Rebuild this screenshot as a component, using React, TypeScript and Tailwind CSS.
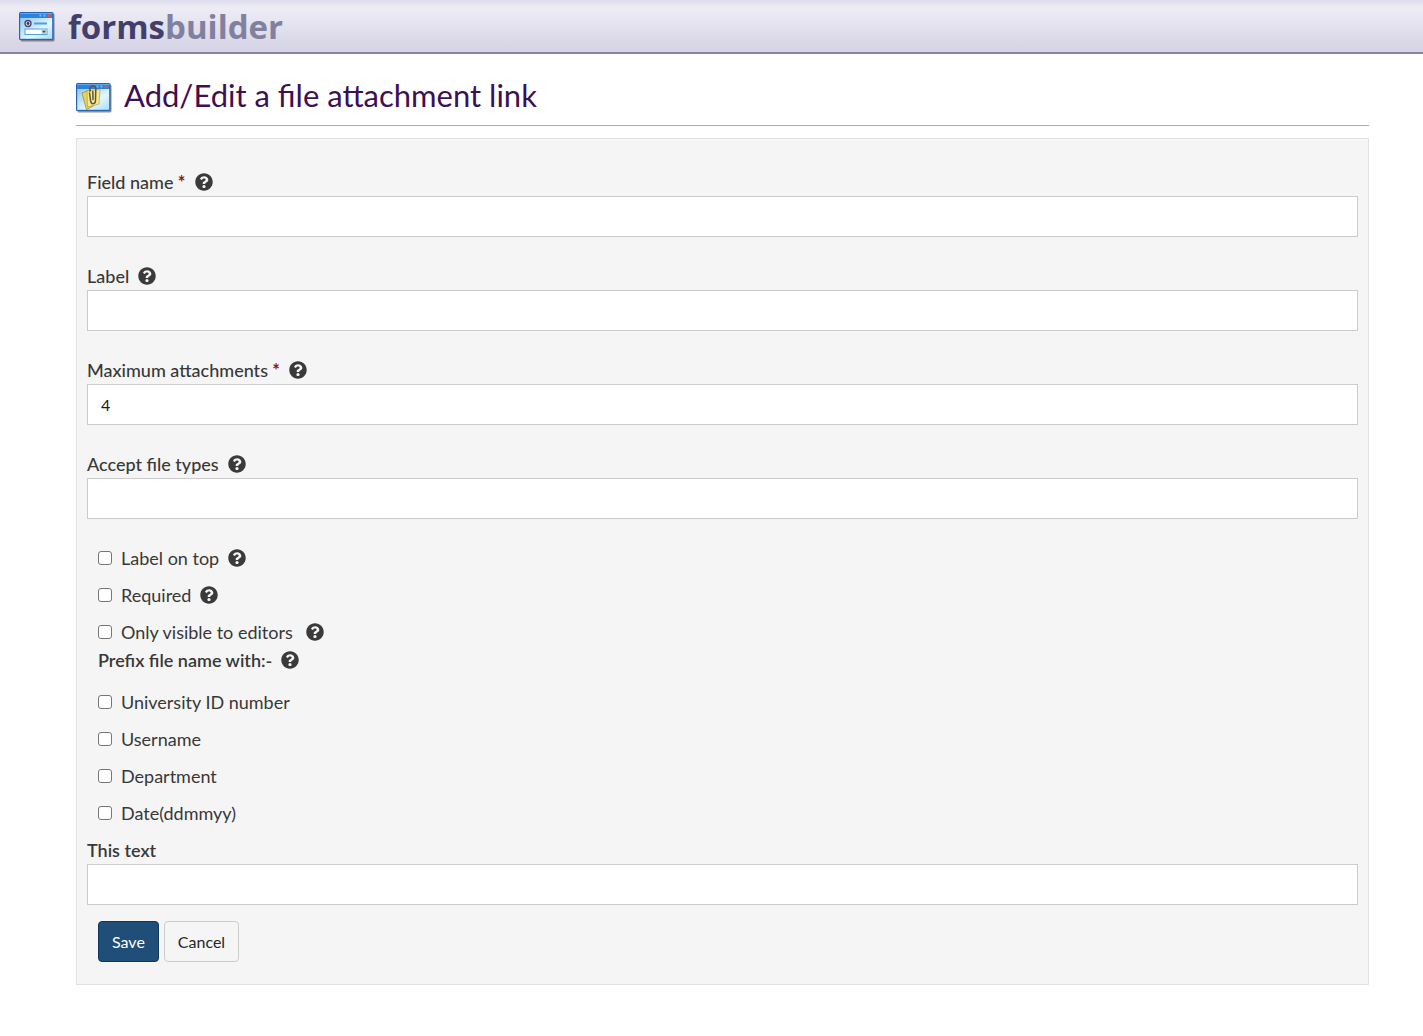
import React from 'react';
import { FaQuestionCircle } from 'react-icons/fa';

interface HelpProps {
  topic: string;
}

const Help: React.FC<HelpProps> = ({ topic }) => (
  <button type="button" aria-label={`Help: ${topic}`} className="text-[#3a3a3a]">
    <FaQuestionCircle size={18} />
  </button>
);

interface TextFieldProps {
  id: string;
  label: string;
  required?: boolean;
  help?: boolean;
  value?: string;
}

const TextField: React.FC<TextFieldProps> = ({ id, label, required, help = true, value = '' }) => (
  <div>
    <div className="flex h-7 items-center gap-[9px]">
      <label
        htmlFor={id}
        className={`text-lg leading-7 text-[#383838] ${help ? 'font-medium' : 'font-semibold'}`}
      >
        {label}
        {required && <span className="font-bold text-[#8c1515]"> *</span>}
      </label>
      {help && <Help topic={label} />}
    </div>
    <input
      id={id}
      type="text"
      defaultValue={value}
      required={required}
      className="block h-[41px] w-full border border-[#cbcbcb] bg-white px-[13px] text-base text-[#1a1a1a]"
    />
  </div>
);

interface TickBoxProps {
  id: string;
  label: string;
  help?: boolean;
}

const TickBox: React.FC<TickBoxProps> = ({ id, label, help }) => (
  <div className="flex h-[37px] items-center gap-[9px]">
    <div className="flex items-center gap-[9px]">
      <input
        id={id}
        type="checkbox"
        className="size-[14px] appearance-none rounded-[3px] border border-[#767676] bg-white checked:bg-[#1f4e79]"
      />
      <label htmlFor={id} className="text-lg leading-7 whitespace-pre text-[#383838]">
        {label}
      </label>
    </div>
    {help && <Help topic={label} />}
  </div>
);

// Small application window, used as the frame of both icons
const WindowFrame: React.FC<{ id: string; children: React.ReactNode }> = ({ id, children }) => (
  <svg viewBox="0 0 36 30" className="h-[30px] w-9 shrink-0" aria-hidden="true">
    <defs>
      <linearGradient id={id} x1="0" y1="0" x2="1" y2="1">
        <stop offset="0" stopColor="#8fc8f6" />
        <stop offset="0.6" stopColor="#e2f7ff" />
        <stop offset="1" stopColor="#a9dcfa" />
      </linearGradient>
    </defs>
    <rect x="1.5" y="1.5" width="34" height="28" rx="1.5" fill="#55525f" opacity="0.65" />
    <rect x="0" y="0" width="34.5" height="28" rx="1.5" fill="#2864b4" />
    <rect x="1" y="1" width="32.5" height="5" fill="#2c83dd" />
    <rect x="1" y="1" width="32.5" height="1" fill="#5ba8ee" />
    <rect x="20.5" y="2.5" width="2" height="2" fill="#7dbaf2" />
    <rect x="24.5" y="2.5" width="2" height="2" fill="#7dbaf2" />
    <rect x="28.5" y="2" width="3" height="3" fill="#dd5a38" />
    <rect x="1.2" y="6" width="32" height="20.8" fill={`url(#${id})`} />
    {children}
  </svg>
);

const FormIcon = () => (
  <WindowFrame id="form-window">
    <circle cx="9" cy="11.5" r="3" fill="#e6e6f0" stroke="#454069" strokeWidth="1.3" />
    <circle cx="9" cy="11.5" r="1.4" fill="#393458" />
    <rect x="15" y="10.5" width="13" height="2" fill="#4ba0df" />
    <rect x="6" y="17" width="22" height="5.5" fill="#fff" stroke="#50a3df" />
    <rect x="22.5" y="17.5" width="5" height="4.5" fill="#c5ccd2" />
    <path d="M23.2 18.8h3.6L25 21z" fill="#454553" />
  </WindowFrame>
);

const AttachmentIcon = () => (
  <WindowFrame id="attachment-window">
    <path d="M6 10l8-3.5 4 16-7.5 4.3z" fill="#e5d35d" stroke="#948338" strokeWidth="0.7" />
    <path d="M11 8l13-1.5-1 14.5-11.5 3z" fill="#faeb86" stroke="#b29f48" strokeWidth="0.7" />
    <path
      d="M13.5 10l1.2 8.5c.7 3.4 4.7 2.5 4.8-.8L19.8 6c-.2-4.1-5.8-3.8-5.8-.3v2.6M16.8 8.5l.2 8"
      fill="none"
      stroke="#57554c"
      strokeWidth="1.5"
      strokeLinecap="round"
    />
  </WindowFrame>
);

const App: React.FC = () => {
  return (
    <div className="min-h-screen bg-white font-['Lato',sans-serif]">
      <header className="flex h-[54px] items-center gap-[13px] border-b-2 border-[#8885a3] bg-linear-to-b from-[#dddced] via-[#eeedf6] via-15% to-[#d4d2e4] px-[19px] pt-[2px]">
        <FormIcon />
        <span className="font-['Open_Sans',sans-serif] text-[33px] leading-[50px] font-bold text-[#433f6b]">
          forms<span className="text-[#8280a0]">builder</span>
        </span>
      </header>

      <main className="pr-[54px] pl-[76px]">
        <div className="flex h-[72px] items-center gap-3 border-b border-[#adadad] pt-4">
          <AttachmentIcon />
          <h1 className="pb-[6px] text-[31px] leading-10 text-[#3c1053]">Add/Edit a file attachment link</h1>
        </div>

        <form
          className="mt-3 border border-[#e1e1e1] bg-[#f5f5f5] px-[10px] pt-[29px] pb-[22px]"
          onSubmit={(e) => e.preventDefault()}
        >
          <div className="flex flex-col gap-[25px]">
            <TextField id="field-name" label="Field name" required />
            <TextField id="field-label" label="Label" />
            <TextField id="max-attachments" label="Maximum attachments" required value="4" />
            <TextField id="file-types" label="Accept file types" />
          </div>

          <div className="mt-5 px-[11px]">
            <TickBox id="label-on-top" label="Label on top" help />
            <TickBox id="required" label="Required" help />
            <TickBox id="editors-only" label="Only visible to editors " help />
          </div>

          <fieldset className="px-[11px]">
            <legend className="mb-[13px] flex h-5 items-center gap-[9px] text-lg leading-5 font-semibold text-[#383838]">
              Prefix file name with:-
              <Help topic="Prefix file name with" />
            </legend>
            <TickBox id="prefix-id" label="University ID number" />
            <TickBox id="prefix-username" label="Username" />
            <TickBox id="prefix-department" label="Department" />
            <TickBox id="prefix-date" label="Date(ddmmyy)" />
          </fieldset>

          <div className="mt-[5px]">
            <TextField id="prefix-text" label="This text" help={false} />
          </div>

          <div className="mt-4 flex gap-[5px] px-[11px]">
            <button
              type="submit"
              className="h-[41px] rounded-[4px] border border-[#0f365f] bg-[#1f4e79] px-[13px] text-base text-white"
            >
              Save
            </button>
            <button
              type="button"
              className="h-[41px] rounded-[4px] border border-[#cccccc] bg-[#f5f5f5] px-[13px] text-base text-[#262626]"
            >
              Cancel
            </button>
          </div>
        </form>
      </main>
    </div>
  );
};

export default App;
